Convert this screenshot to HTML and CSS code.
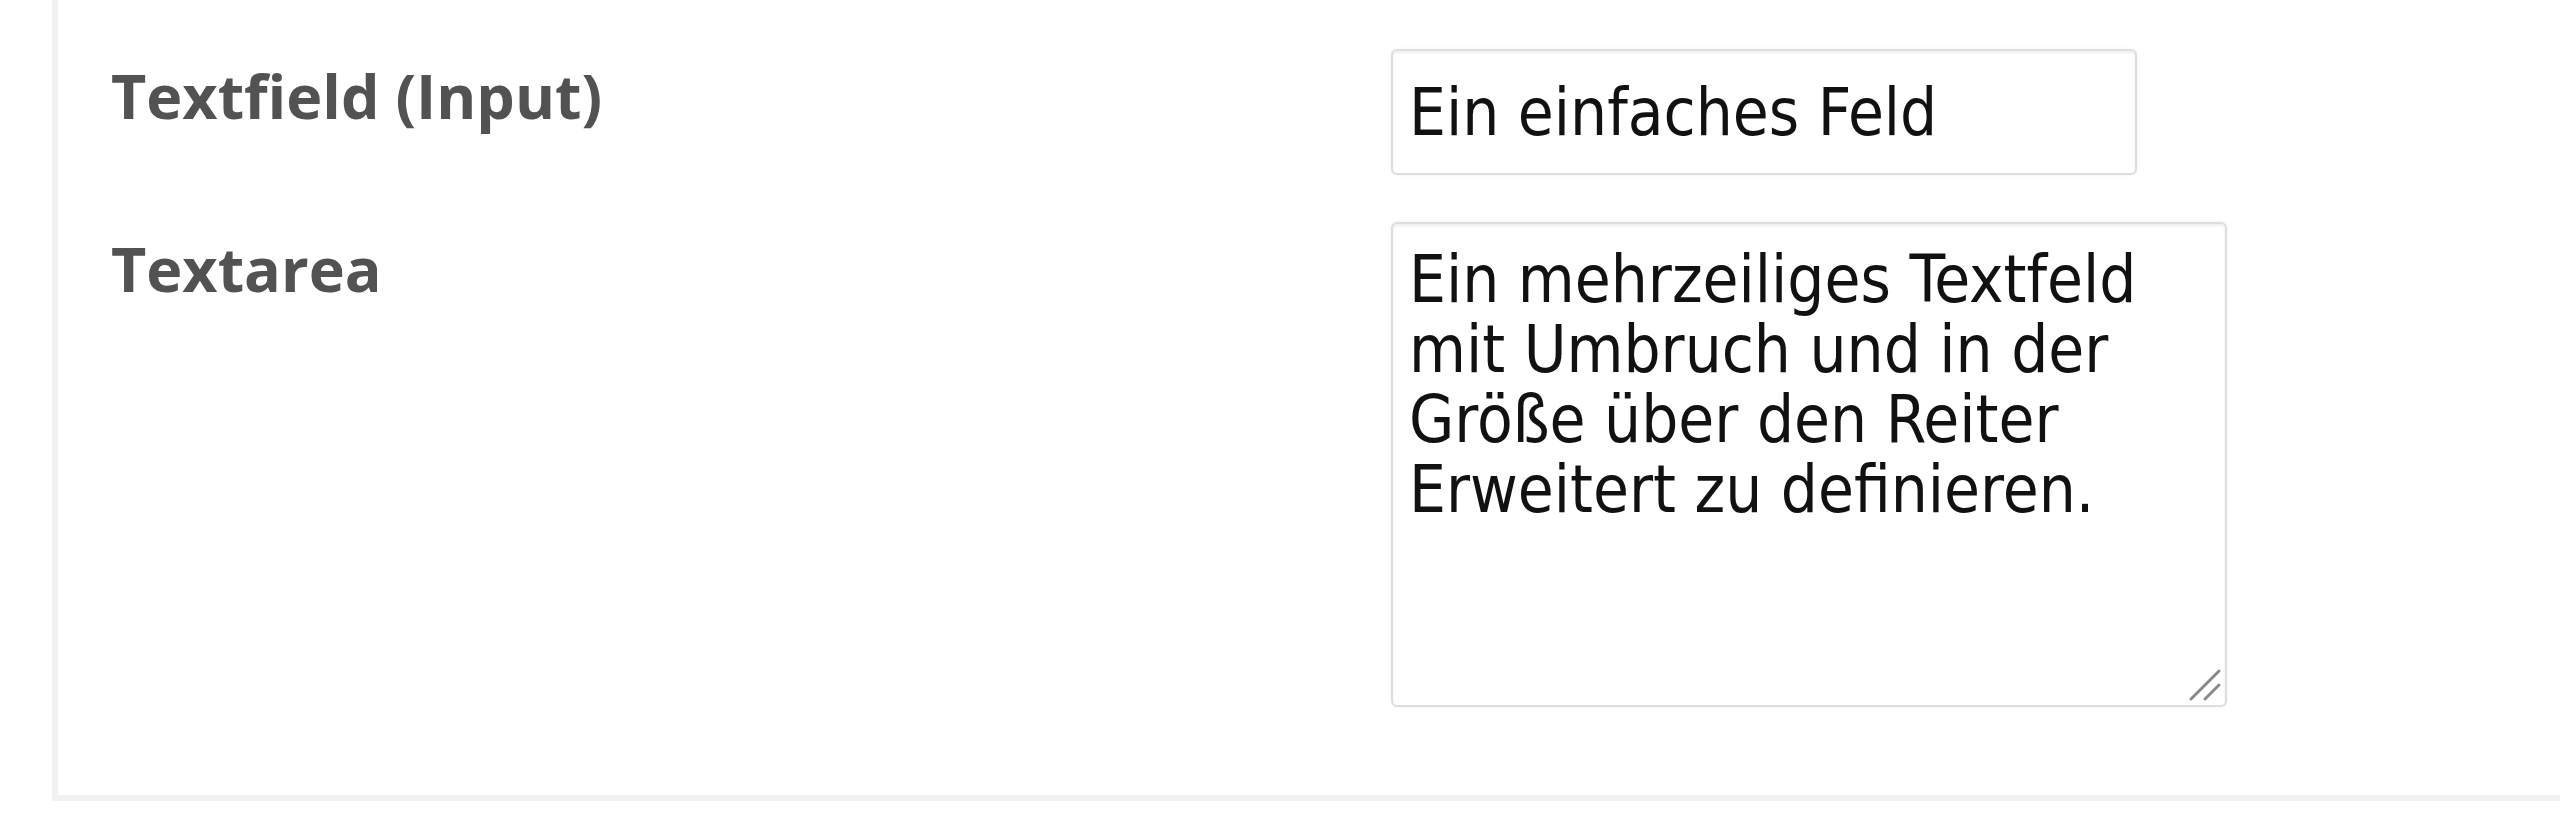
FILE: index.html
```html
<!DOCTYPE html>
<html lang="de">
<head>
    <meta charset="UTF-8">
    <meta name="viewport" content="width=device-width, initial-scale=1.0">
    <title>Formularfelder</title>
    <link rel="stylesheet" href="styles.css">
</head>
<body>

<div class="panel">
    <div class="form-row">
        <label for="textfield">Textfield (Input)</label>
        <input type="text" id="textfield" value="Ein einfaches Feld">
    </div>

    <div class="form-row">
        <label for="textarea">Textarea</label>
        <div class="textarea-wrap">
            <textarea id="textarea">Ein mehrzeiliges Textfeld mit Umbruch und in der Größe über den Reiter Erweitert zu definieren.</textarea>
            <svg class="grip" width="36" height="36" viewBox="0 0 36 36">
                <line x1="4" y1="32" x2="32" y2="4" stroke="#8a8a8a" stroke-width="3" stroke-linecap="round"/>
                <line x1="18" y1="32" x2="32" y2="18" stroke="#8a8a8a" stroke-width="3" stroke-linecap="round"/>
            </svg>
        </div>
    </div>
</div>

</body>
</html>
```

FILE: styles.css
```css
body {
    margin: 0;
    background-color: #ffffff;
    font-family: "Open Sans", "DejaVu Sans", sans-serif;
}

.panel {
    margin-left: 52px;
    padding: 49px 0 88px 0;
    border-left: 6px solid #f1f1f1;
    border-bottom: 6px solid #f1f1f1;
    background-color: #ffffff;
}

.form-row {
    display: grid;
    grid-template-columns: 1333px 1fr;
    align-items: start;
}

.form-row + .form-row {
    margin-top: 47px;
}

label {
    padding-left: 53px;
    padding-top: 10px;
    font-size: 61px;
    line-height: 1.2;
    font-weight: bold;
    color: #525252;
}

input,
textarea {
    font-family: "DejaVu Sans Condensed", "DejaVu Sans", sans-serif;
    font-stretch: condensed;
    font-size: 65px;
    color: #111111;
    background-color: #ffffff;
    border: 2px solid #dedede;
    border-radius: 6px;
    box-shadow: inset 0 2px 3px rgba(0, 0, 0, 0.07), 0 0 4px rgba(0, 0, 0, 0.05);
    outline: none;
    box-sizing: border-box;
    margin: 0;
}

input {
    width: 746px;
    height: 126px;
    padding: 0 16px;
}

.textarea-wrap {
    position: relative;
    width: 836px;
}

textarea {
    display: block;
    width: 836px;
    height: 485px;
    padding: 21px 16px;
    line-height: 70px;
    resize: none;
    overflow: hidden;
}

.grip {
    position: absolute;
    right: 4px;
    bottom: 4px;
}
```
